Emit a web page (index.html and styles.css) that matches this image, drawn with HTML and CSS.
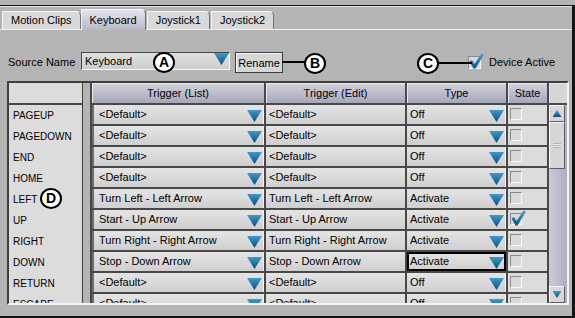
FILE: index.html
```html
<!DOCTYPE html>
<html lang="en">
<head>
    <meta charset="UTF-8">
    <title>Input Sources - Keyboard</title>
    <link rel="stylesheet" href="styles.css">
</head>
<body>
    <div class="window">
        <div class="tabs">
            <div class="tab">Motion Clips</div>
            <div class="tab active">Keyboard</div>
            <div class="tab">Joystick1</div>
            <div class="tab">Joystick2</div>
        </div>
        <div class="panel">
            <div class="source-row">
                <span class="source-label">Source Name</span>
                <div class="combo"><span>Keyboard</span><i class="arrow"></i></div>
                <button class="rename">Rename</button>
                <div class="device">
                    <span class="box">
                        <svg class="tick" width="15" height="16" viewBox="0 0 15 16">
                            <defs>
                                <linearGradient id="tg1" x1="0" y1="0" x2="0" y2="1">
                                    <stop offset="0" stop-color="#4aa2d4"/>
                                    <stop offset="1" stop-color="#0b4f7c"/>
                                </linearGradient>
                            </defs>
                            <polygon points="0.5,8.5 3,7 5.5,11 12.5,0.5 15,1.5 6.5,15.5 4.5,15.5" fill="url(#tg1)"/>
                        </svg>
                    </span>
                    <span>Device Active</span>
                </div>
            </div>

            <div class="grid-frame">
                <div class="labels">
                    <div class="labels-head"></div>
                    <div class="label">PAGEUP</div>
                    <div class="label">PAGEDOWN</div>
                    <div class="label">END</div>
                    <div class="label">HOME</div>
                    <div class="label">LEFT</div>
                    <div class="label">UP</div>
                    <div class="label">RIGHT</div>
                    <div class="label">DOWN</div>
                    <div class="label">RETURN</div>
                    <div class="label">ESCAPE</div>
                </div>

                <div class="table">
                    <div class="th">Trigger (List)</div>
                    <div class="th">Trigger (Edit)</div>
                    <div class="th">Type</div>
                    <div class="th">State</div>
                    <div class="th blank"></div>

                    <div class="scroll">
                        <div class="sb-btn"><i class="up"></i></div>
                        <div class="thumb"><i class="grip"></i></div>
                        <div class="track"></div>
                        <div class="sb-btn"><i class="down"></i></div>
                    </div>

                    <div class="td list"><span>&lt;Default&gt;</span><i class="arrow"></i></div>
                    <div class="td edit">&lt;Default&gt;</div>
                    <div class="td type"><span>Off</span><i class="arrow"></i></div>
                    <div class="td state"><span class="box"></span></div>

                    <div class="td list"><span>&lt;Default&gt;</span><i class="arrow"></i></div>
                    <div class="td edit">&lt;Default&gt;</div>
                    <div class="td type"><span>Off</span><i class="arrow"></i></div>
                    <div class="td state"><span class="box"></span></div>

                    <div class="td list"><span>&lt;Default&gt;</span><i class="arrow"></i></div>
                    <div class="td edit">&lt;Default&gt;</div>
                    <div class="td type"><span>Off</span><i class="arrow"></i></div>
                    <div class="td state"><span class="box"></span></div>

                    <div class="td list"><span>&lt;Default&gt;</span><i class="arrow"></i></div>
                    <div class="td edit">&lt;Default&gt;</div>
                    <div class="td type"><span>Off</span><i class="arrow"></i></div>
                    <div class="td state"><span class="box"></span></div>

                    <div class="td list"><span>Turn Left - Left Arrow</span><i class="arrow"></i></div>
                    <div class="td edit">Turn Left - Left Arrow</div>
                    <div class="td type"><span>Activate</span><i class="arrow"></i></div>
                    <div class="td state"><span class="box"></span></div>

                    <div class="td list"><span>Start - Up Arrow</span><i class="arrow"></i></div>
                    <div class="td edit">Start - Up Arrow</div>
                    <div class="td type"><span>Activate</span><i class="arrow"></i></div>
                    <div class="td state">
                        <span class="box">
                            <svg class="tick" width="15" height="16" viewBox="0 0 15 16">
                                <defs>
                                    <linearGradient id="tg2" x1="0" y1="0" x2="0" y2="1">
                                        <stop offset="0" stop-color="#4aa2d4"/>
                                        <stop offset="1" stop-color="#0b4f7c"/>
                                    </linearGradient>
                                </defs>
                                <polygon points="0.5,8.5 3,7 5.5,11 12.5,0.5 15,1.5 6.5,15.5 4.5,15.5" fill="url(#tg2)"/>
                            </svg>
                        </span>
                    </div>

                    <div class="td list"><span>Turn Right - Right Arrow</span><i class="arrow"></i></div>
                    <div class="td edit">Turn Right - Right Arrow</div>
                    <div class="td type"><span>Activate</span><i class="arrow"></i></div>
                    <div class="td state"><span class="box"></span></div>

                    <div class="td list"><span>Stop - Down Arrow</span><i class="arrow"></i></div>
                    <div class="td edit">Stop - Down Arrow</div>
                    <div class="td type focused"><span>Activate</span><i class="arrow"></i></div>
                    <div class="td state"><span class="box"></span></div>

                    <div class="td list"><span>&lt;Default&gt;</span><i class="arrow"></i></div>
                    <div class="td edit">&lt;Default&gt;</div>
                    <div class="td type"><span>Off</span><i class="arrow"></i></div>
                    <div class="td state"><span class="box"></span></div>

                    <div class="td list"><span>&lt;Default&gt;</span><i class="arrow"></i></div>
                    <div class="td edit">&lt;Default&gt;</div>
                    <div class="td type"><span>Off</span><i class="arrow"></i></div>
                    <div class="td state"><span class="box"></span></div>
                </div>
            </div>
        </div>

        <!-- callouts -->
        <div class="callout callout-a">A</div>
        <div class="lead lead-b"></div>
        <div class="callout callout-b">B</div>
        <div class="callout callout-c">C</div>
        <div class="lead lead-c"></div>
        <div class="callout callout-d">D</div>
    </div>
</body>
</html>
```

FILE: styles.css
```css
body {
    margin: 0;
    background-color: #b4b4b4;
    font-family: "Liberation Sans", Arial, sans-serif;
    font-size: 11px;
    color: #000;
}
.window {
    position: relative;
    margin-top: 5px;
    width: 572px;
    height: 310px;
    border-top: 1px solid #141414;
    border-right: 3px solid #141414;
    border-bottom: 2px solid #141414;
}
.tabs {
    display: flex;
    align-items: flex-end;
    height: 22px;
    padding-left: 2px;
    border-top: 1px solid #e4e4e4;
}
.tab {
    height: 17px;
    line-height: 17px;
    padding: 0 8px;
    margin-right: 1px;
    background-color: #d9d9d9;
    border: 1px solid #f6f6f6;
    border-right-color: #707070;
    border-bottom: none;
    border-top-right-radius: 5px;
}
.tab:first-child {
    margin-right: 0;
}
.tab.active {
    position: relative;
    z-index: 1;
    height: 20px;
    line-height: 20px;
    margin-bottom: -1px;
    background: linear-gradient(#e4e4ec, #b8b8c9);
}
.panel {
    box-sizing: border-box;
    height: 287px;
    padding-top: 22px;
    border-top: 1px solid #f2f2f2;
}
.source-row {
    display: flex;
    align-items: flex-start;
    height: 21px;
    padding: 0 17px 0 8px;
}
.source-label {
    width: 73px;
    line-height: 21px;
}
.combo {
    box-sizing: border-box;
    width: 149px;
    height: 18px;
    display: flex;
    justify-content: space-between;
    padding-left: 3px;
    line-height: 16px;
    border: 1px solid;
    border-color: #484848 #f6f6f6 #f6f6f6 #484848;
    background: linear-gradient(#e0e0e0, #cdcdcd);
}
.combo .arrow {
    margin: 0;
}
.rename {
    box-sizing: border-box;
    width: 48px;
    height: 21px;
    margin-left: 5px;
    padding: 0;
    font: inherit;
    color: #000;
    background-color: #d6d6d6;
    border: 1px solid #3a3a3a;
    box-shadow: inset 1px 1px #f8f8f8;
}
.device {
    margin-left: auto;
    margin-top: 3px;
    display: flex;
    align-items: center;
    gap: 8px;
    line-height: 14px;
}
.device .box {
    width: 13px;
    height: 13px;
}
.box {
    position: relative;
    display: block;
    box-sizing: border-box;
    width: 12px;
    height: 12px;
    border: 1px solid;
    border-color: #8a8a8a #fafafa #fafafa #8a8a8a;
    background-color: #d9d9d9;
}
.tick {
    position: absolute;
    left: 0;
    top: -4px;
}
.arrow {
    flex: none;
    width: 15px;
    height: 12px;
    margin: 5px 1px 0 0;
    clip-path: polygon(0 0, 100% 0, 50% 100%);
    background: linear-gradient(#3f9acb, #0b4f7e);
}

/* grid */
.grid-frame {
    box-sizing: border-box;
    width: 562px;
    height: 224px;
    margin: 8px 0 0 7px;
    display: flex;
    overflow: hidden;
    border: 2px solid;
    border-color: #3e3e3e #f4f4f4 #f4f4f4 #3e3e3e;
}
.labels {
    flex: none;
    width: 73px;
    margin-right: 7px;
    border-right: 1px solid #3e3e3e;
    background-color: #dcdcdc;
}
.labels-head {
    height: 20px;
    border-bottom: 2px solid #484848;
}
.label {
    height: 21px;
    line-height: 21px;
    padding-left: 4px;
    font-size: 10px;
}
.table {
    flex: none;
    width: 475px;
    display: grid;
    grid-template-columns: 172px 139px 99px 39px 18px;
    grid-template-rows: 20px;
    grid-auto-rows: 19px;
    gap: 2px;
    align-content: start;
    padding-left: 2px;
    background-color: #484848;
}
.th {
    line-height: 20px;
    text-align: center;
    background: linear-gradient(#d4d4dc, #a6a6ba);
    box-shadow: inset 1px 1px #e6e6ee;
}
.th.blank {
    background: #d6d6d6;
}
.td {
    line-height: 19px;
    white-space: nowrap;
    overflow: hidden;
    background: linear-gradient(#e4e4e4, #cfcfcf);
}
.list {
    display: flex;
    justify-content: space-between;
    padding-left: 5px;
    border-left: 2px solid #6e6e6e;
    border-right: 1px solid #f2f2f2;
}
.edit {
    padding-left: 3px;
}
.type {
    display: flex;
    justify-content: space-between;
    padding-left: 3px;
    border-right: 1px solid #f2f2f2;
}
.type.focused {
    outline: 2px solid #000;
    outline-offset: -2px;
}
.state {
    padding: 3px 0 0 2px;
    background: #dcdcdc;
}

/* scrollbar */
.scroll {
    grid-column: 5;
    grid-row: 2 / span 10;
    align-self: start;
    height: 198px;
    display: flex;
    flex-direction: column;
    background: linear-gradient(to right, #cacad7, #aeaec3);
}
.sb-btn, .thumb {
    box-sizing: border-box;
    width: 16px;
    border: 1px solid;
    border-color: #f6f6f6 #5c5c5c #5c5c5c #f6f6f6;
    background-color: #d6d6d6;
    display: flex;
    align-items: center;
    justify-content: center;
}
.sb-btn {
    height: 17px;
}
.thumb {
    height: 47px;
}
.track {
    flex: 1;
}
.up, .down {
    width: 9px;
    height: 7px;
    background: linear-gradient(#3f9acb, #0b4f7e);
}
.up {
    clip-path: polygon(50% 0, 100% 100%, 0 100%);
}
.down {
    clip-path: polygon(0 0, 100% 0, 50% 100%);
}
.grip {
    width: 8px;
    height: 5px;
    background: repeating-linear-gradient(#b0b0b0 0 1px, #f0f0f0 1px 2px);
}

/* callouts */
.callout {
    position: absolute;
    box-sizing: border-box;
    width: 22px;
    height: 21px;
    border: 2px solid #000;
    border-radius: 50%;
    background-color: #fff;
    font: bold 14px "Liberation Sans", Arial, sans-serif;
    line-height: 17px;
    text-align: center;
}
.callout-a { left: 153px; top: 46px; }
.callout-b { left: 304px; top: 47px; }
.callout-c { left: 417px; top: 47px; }
.callout-d { left: 40px; top: 182px; }
.lead {
    position: absolute;
    height: 2px;
    background-color: #000;
}
.lead-b { left: 282px; top: 55px; width: 23px; }
.lead-c { left: 438px; top: 56px; width: 34px; }
```
